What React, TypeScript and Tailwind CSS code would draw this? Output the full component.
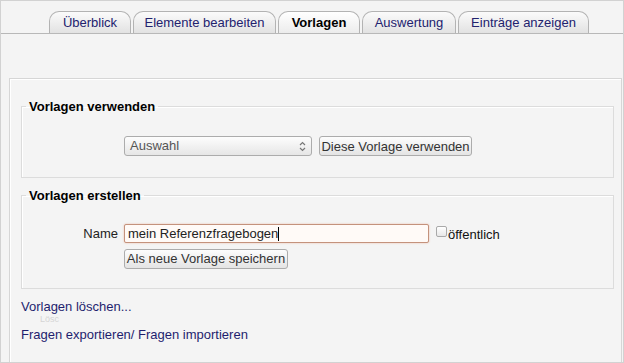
import React from 'react';

const tabs = [
  { label: 'Überblick', width: 'w-[82px]' },
  { label: 'Elemente bearbeiten', width: 'w-[143px]' },
  { label: 'Vorlagen', width: 'w-[82px]', active: true },
  { label: 'Auswertung', width: 'w-[94px]' },
  { label: 'Einträge anzeigen', width: 'w-[131px]' },
];

function Button({ children, width }: { children: React.ReactNode; width: string }) {
  return (
    <div
      className={`${width} h-[20px] flex items-center justify-center border border-[#acacac] rounded-[3px] bg-linear-to-b from-[#fdfdfd] to-[#e4e4e4] text-[13px] text-[#333] leading-none`}
    >
      {children}
    </div>
  );
}

export default function App() {
  return (
    <div className="w-[624px] h-[363px] overflow-hidden flex flex-col bg-[#f4f4f4] border border-[#d2d2d2] font-['Liberation_Sans',Arial,sans-serif] text-[13px]">
      {/* tab bar */}
      <div className="flex items-end gap-[2px] pl-[48px] pt-[10px] border-b border-[#b8b8b8]">
        {tabs.map((tab) => (
          <div
            key={tab.label}
            className={`${tab.width} h-[22px] flex items-center justify-center border border-b-0 border-[#b3b3b3] rounded-t-[10px] bg-linear-to-b ${
              tab.active
                ? 'from-white to-[#ececec] font-bold text-black'
                : 'from-[#fbfbfb] to-[#e2e2e2] text-[#22226e]'
            }`}
          >
            {tab.label}
          </div>
        ))}
      </div>

      {/* content box */}
      <div className="flex-1 mt-[44px] ml-[8px] mr-[1px] border border-b-0 border-[#d6d6d6] shadow-[inset_1px_1px_0_#fff] pl-[11px] pr-[7px] pt-[20px]">
        <fieldset className="border border-[#dcdcdc] px-[4px] pb-[21px] shadow-[inset_1px_1px_0_#fff]">
          <legend className="px-[3px] font-bold text-black leading-[15px]">Vorlagen verwenden</legend>
          <div className="flex items-center gap-[6px] pt-[22px]">
            <div className="w-[92px]" />
            <div className="w-[188px] h-[20px] flex items-center justify-between border border-[#acacac] rounded-[3px] bg-linear-to-b from-[#fdfdfd] to-[#e6e6e6] pl-[5px] pr-[5px] text-[#555]">
              <span>Auswahl</span>
              <svg width="7" height="11" viewBox="0 0 7 11" fill="none" stroke="#777" strokeWidth="1.2">
                <path d="M1 4 L3.5 1.5 L6 4" />
                <path d="M1 7 L3.5 9.5 L6 7" />
              </svg>
            </div>
            <div className="ml-[1px]">
              <Button width="w-[153px]">Diese Vorlage verwenden</Button>
            </div>
          </div>
        </fieldset>

        <fieldset className="mt-[10px] border border-[#dcdcdc] px-[4px] pb-[19px] shadow-[inset_1px_1px_0_#fff]">
          <legend className="px-[3px] font-bold text-black leading-[15px]">Vorlagen erstellen</legend>
          <div className="flex items-center gap-[6px] pt-[20px]">
            <div className="w-[92px] text-right text-[#222]">Name</div>
            <div className="w-[305px] h-[19px] flex items-center border border-[#c4927c] rounded-[2px] bg-[#fffaf7] shadow-[0_0_2px_#eab8a4] pl-[3px] text-[#222]">
              <span>mein Referenzfragebogen</span>
              <span className="w-px h-[14px] bg-black" />
            </div>
            <div className="flex items-center ml-[1px]">
              <div className="w-[11px] h-[11px] border border-[#a9a9a9] rounded-[2px] bg-linear-to-b from-white to-[#e8e8e8] -mt-[4px]" />
              <span className="ml-px text-[#111] mt-[2px]">öffentlich</span>
            </div>
          </div>
          <div className="flex gap-[6px] mt-[4px]">
            <div className="w-[92px]" />
            <Button width="w-[164px]">Als neue Vorlage speichern</Button>
          </div>
        </fieldset>

        <div className="mt-[11px] leading-[14px] text-[#1e1e6e]">Vorlagen löschen...</div>
        <div className="pl-[19px] text-[9px] leading-[10px] text-[#d4d4d4]">Lösc</div>
        <div className="mt-[3px] leading-[16px] text-[#1e1e6e]">Fragen exportieren/ Fragen importieren</div>
      </div>
    </div>
  );
}
